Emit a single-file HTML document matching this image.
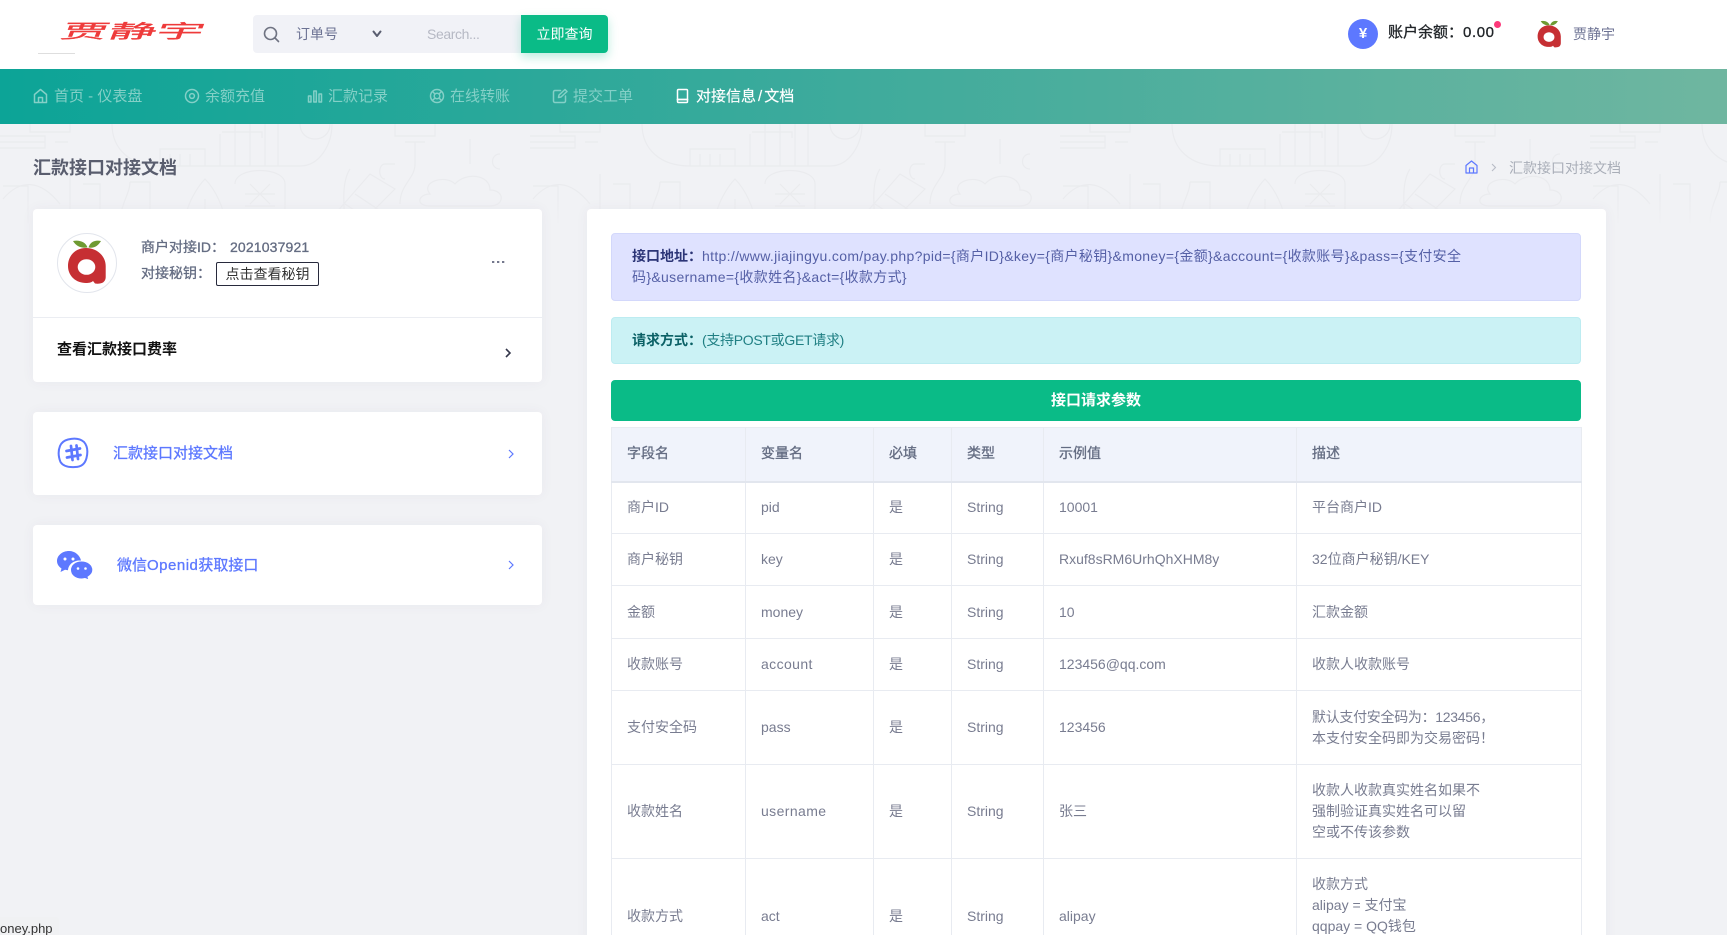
<!DOCTYPE html>
<html lang="zh-CN">
<head>
<meta charset="utf-8">
<title>汇款接口对接文档</title>
<style>
*{box-sizing:border-box;margin:0;padding:0}
html,body{width:1727px;height:935px;overflow:hidden;background:#f1f2f5}
#root{position:relative;width:1727px;height:935px;overflow:hidden;background:#f1f2f5;font-family:"Liberation Sans","Noto Sans CJK SC",sans-serif;font-size:14px;color:#6c7293}
.a{position:absolute;white-space:nowrap;line-height:20px}
.m{-webkit-text-stroke:.3px currentColor}
#hd{position:absolute;left:0;top:0;width:1727px;height:69px;background:#fff}
#nav{position:absolute;left:0;top:69px;width:1727px;height:55px;background:linear-gradient(90deg,#0ca497 0%,#3fab9c 50%,#6fb6a0 100%)}
.nt{font-size:15px;color:#84d0c7;top:87px}
.ni{position:absolute;top:88px;fill:none;stroke:#84d0c7;stroke-width:1.5;stroke-linecap:round;stroke-linejoin:round}
.card{position:absolute;left:33px;width:509px;background:#fff;border-radius:4px;box-shadow:0 0 13px rgba(82,63,105,.05)}
#panel{position:absolute;left:587px;top:209px;width:1019px;height:740px;background:#fff;border-radius:4px;box-shadow:0 0 13px rgba(82,63,105,.05)}
.alert{position:absolute;left:611px;width:970px;border-radius:4px;line-height:21px}
table{position:absolute;left:611px;top:427px;width:970px;border-collapse:collapse;table-layout:fixed;background:#fff;font-size:14px;color:#787c90}
td,th{border:1px solid #e8ebf1;padding:0 15px;text-align:left;vertical-align:middle;line-height:21px;font-weight:400;white-space:nowrap;overflow:hidden}
th{background:#f0f3fb;color:#646c82;border-bottom:2px solid #e2e6ee;-webkit-text-stroke:.3px #646c82;padding-bottom:2px}
</style>
</head>
<body>
<div id="root">
<!-- background doodle -->
<svg style="position:absolute;left:0;top:124px" width="1727" height="100" viewBox="0 0 1727 100">
<defs>
<linearGradient id="f" x1="0" y1="0" x2="0" y2="1"><stop offset="0" stop-color="#fff"/><stop offset=".75" stop-color="#fff"/><stop offset="1" stop-color="#000"/></linearGradient>
<mask id="mk"><rect width="1727" height="100" fill="url(#f)"/></mask>
<pattern id="dd" width="530" height="100" patternUnits="userSpaceOnUse">
<g fill="none" stroke="#eaebee" stroke-width="1.2">
<path d="M0 12H45V24H0M0 18H45M55 18H68"/>
<path d="M30 0V8H70V0M112 0C112 25 130 42 160 42H300C320 42 332 20 332 0"/>
<path d="M160 42V25H205V42M170 42V30M180 42V30M190 42V30"/>
<path d="M220 10V42M235 0V42M250 0V42M265 0V42M278 0V42M222 8H262V14"/>
<path d="M300 0C300 20 330 20 330 0M395 0V12H435V0M405 18H425M415 18V40C415 55 400 60 400 80"/>
<path d="M395 40H385C378 40 378 55 385 55M470 15V40M500 30C490 30 490 45 500 45"/>
<path d="M3 62H28V100M3 75C20 55 40 55 60 80M70 50V100M83 60H100V100"/>
<path d="M235 60C235 42 285 42 285 60V100M245 70H275M245 82H275M245 94H275M250 60L270 80M270 60L250 80"/>
<path d="M335 90L370 50L395 65L360 100M345 80L375 100M355 70L385 90"/>
<path d="M430 70C420 58 445 50 455 60C465 48 490 50 490 66C505 66 505 82 490 82H430C415 82 418 70 430 70Z"/>
<path d="M350 45C340 60 345 90 345 100M185 100C185 80 200 60 205 55C215 65 225 85 225 100M205 75V90"/>
<path d="M130 58H150V100M120 100C120 80 130 70 130 58"/>
</g>
</pattern>
</defs>
<rect width="1727" height="100" fill="url(#dd)" mask="url(#mk)"/>
</svg>

<!-- header -->
<div id="hd"></div>
<div class="a m" style="left:62px;top:20px;font-size:19px;line-height:22px;color:#ee3b3b;transform-origin:0 50%;transform:skewX(-22deg) scaleX(2.5);font-family:'Noto Sans CJK SC',sans-serif">贾静宇</div>
<div style="position:absolute;left:38px;top:53px;width:37px;height:1px;background:#dedede"></div>

<div style="position:absolute;left:253px;top:15px;width:268px;height:38px;background:#f1f2f7;border-radius:4px 0 0 4px"></div>
<svg style="position:absolute;left:263px;top:26px" width="18" height="17" viewBox="0 0 18 17" fill="none" stroke="#6f7382" stroke-width="1.6" stroke-linecap="round"><circle cx="7.5" cy="7.5" r="6"/><path d="M12 12L15.5 15.5"/></svg>
<div class="a" style="left:296px;top:24px;color:#6c7293">订单号</div>
<svg style="position:absolute;left:372px;top:30px" width="10" height="8" viewBox="0 0 10 8" fill="none" stroke="#5a5e70" stroke-width="2" stroke-linecap="round" stroke-linejoin="round"><path d="M1.5 1.5L5 6L8.5 1.5"/></svg>
<div class="a" style="left:427px;top:24px;color:#b6b9c4;letter-spacing:-.4px">Search...</div>
<div class="a" style="left:521px;top:15px;width:87px;height:38px;line-height:38px;background:#0abb87;color:#fff;text-align:center;border-radius:0 4px 4px 0;box-shadow:0 4px 10px rgba(10,187,135,.28)">立即查询</div>

<div style="position:absolute;left:1348px;top:19px;width:30px;height:30px;border-radius:50%;background:#5d78ff;color:#fff;text-align:center;font:bold 15px/30px 'Liberation Sans',sans-serif">¥</div>
<div class="a m" style="left:1388px;top:23px;font-size:15px;color:#212529">账户余额：<span style="letter-spacing:.6px">0.00</span></div>
<div style="position:absolute;left:1493.500px;top:20.500px;width:7px;height:7px;border-radius:50%;background:#fd397a"></div>
<svg style="position:absolute;left:1537px;top:19px" width="24" height="30" viewBox="10 6 39 46"><path d="M29 15C18 15 11 23 11 33C11 43 19 50 29 50C32 50 34.500 49.500 36 48L38 50.500C41 51 44 50.500 46 49.500C48 48 48.700 46 48.700 44V33C48.700 23 40 15 29 15Z" fill="#c62f33"/><ellipse cx="29.500" cy="34" rx="8.800" ry="7.800" fill="#fff"/><path d="M16 8C22 6.500 29 9 30.500 14.500C24 15.500 19 13 16 8ZM44 8C38 6.500 33 9 31.500 14.500C37 15.500 41 13 44 8Z" fill="#6e9a32"/></svg>
<div class="a" style="left:1573px;top:24px;color:#6c7293">贾静宇</div>

<!-- nav -->
<div id="nav"></div>
<svg class="ni" style="left:33px" width="15" height="16" viewBox="0 0 15 16"><path d="M1.500 6.500L7.500 1.500L13.500 6.500V14.500H1.500ZM5.500 14.500V9.500H9.500V14.500"/></svg>
<div class="a nt" style="left:54px">首页 - 仪表盘</div>
<svg class="ni" style="left:184px" width="16" height="16" viewBox="0 0 16 16"><circle cx="8" cy="8" r="6.500"/><circle cx="8" cy="8" r="2.400"/></svg>
<div class="a nt" style="left:205px">余额充值</div>
<svg class="ni" style="left:307px" width="16" height="16" viewBox="0 0 16 16"><rect x="1.500" y="8" width="2.500" height="6"/><rect x="6.800" y="3" width="2.500" height="11"/><rect x="12" y="6" width="2.500" height="8"/></svg>
<div class="a nt" style="left:328px">汇款记录</div>
<svg class="ni" style="left:429px" width="16" height="16" viewBox="0 0 16 16"><circle cx="8" cy="8" r="6.500"/><circle cx="8" cy="8" r="2.800"/><path d="M3.500 3.500L6 6M12.500 3.500L10 6M3.500 12.500L6 10M12.500 12.500L10 10"/></svg>
<div class="a nt" style="left:450px">在线转账</div>
<svg class="ni" style="left:552px" width="16" height="16" viewBox="0 0 16 16"><path d="M8.500 2.500H3C2.200 2.500 1.500 3.200 1.500 4V13C1.500 13.800 2.200 14.500 3 14.500H12C12.800 14.500 13.500 13.800 13.500 13V8"/><path d="M6.500 9.500L7 7L13 1.500L15 3.500L9 9Z"/></svg>
<div class="a nt" style="left:573px">提交工单</div>
<svg class="ni" style="left:676px;stroke:#fff" width="13" height="16" viewBox="0 0 13 16"><rect x="1.500" y="1.500" width="10" height="13" rx="1"/><path d="M1.500 11.500H11.500" stroke-width="1.800"/></svg>
<div class="a nt" style="left:696px;color:#fff;-webkit-text-stroke:.15px #fff">对接信息<span style="padding:0 2px">/</span>文档</div>

<!-- page title -->
<div class="a" style="left:33px;top:157px;font-size:18px;line-height:22px;font-weight:700;color:#595d6e">汇款接口对接文档</div>
<svg style="position:absolute;left:1465px;top:160px" width="13" height="14" viewBox="0 0 13 14" fill="none" stroke="#5d78ff" stroke-width="1.200" stroke-linejoin="round"><path d="M1 5.500L6.500 1L12 5.500V13H1ZM4.500 13V8H8.500V13"/></svg>
<svg style="position:absolute;left:1491px;top:163px" width="6" height="9" viewBox="0 0 6 9" fill="none" stroke="#b8bcc6" stroke-width="1.100"><path d="M1 1L4.500 4.500L1 8"/></svg>
<div class="a" style="left:1509px;top:158px;color:#a9aeb8">汇款接口对接文档</div>

<!-- left cards -->
<div class="card" style="top:209px;height:173px"></div>
<div style="position:absolute;left:33px;top:317px;width:509px;height:1px;background:#ebedf2"></div>
<div style="position:absolute;left:57px;top:233px;width:60px;height:60px;border-radius:50%;border:1px solid #e2e5ec;background:#fff"></div>
<svg style="position:absolute;left:57px;top:233px" width="60" height="60" viewBox="0 0 60 60"><path d="M29 15C18 15 11 23 11 33C11 43 19 50 29 50C32 50 34.500 49.500 36 48L38 50.500C41 51 44 50.500 46 49.500C48 48 48.700 46 48.700 44V33C48.700 23 40 15 29 15Z" fill="#c62f33"/><ellipse cx="29.500" cy="34" rx="8.800" ry="7.800" fill="#fff"/><path d="M16 8C22 6.500 29 9 30.500 14.500C24 15.500 19 13 16 8ZM44 8C38 6.500 33 9 31.500 14.500C37 15.500 41 13 44 8Z" fill="#6e9a32"/></svg>
<div class="a m" style="left:141px;top:237px;color:#646c82">商户对接ID：<span style="margin-left:5px;letter-spacing:.15px">2021037921</span></div>
<div class="a m" style="left:141px;top:263px;color:#646c82">对接秘钥：</div>
<div class="a" style="left:216px;top:262px;width:103px;height:24px;line-height:22px;border:1px solid #282a3c;border-radius:2px;text-align:center;color:#333">点击查看秘钥</div>
<svg style="position:absolute;left:492px;top:260px" width="13" height="4" viewBox="0 0 13 4" fill="#74788d"><rect x="0" y="1" width="2.300" height="2"/><rect x="5" y="1" width="2.300" height="2"/><rect x="10" y="1" width="2.300" height="2"/></svg>
<div class="a" style="left:57px;top:340px;font-size:15px;color:#111;font-weight:700">查看汇款接口费率</div>
<svg style="position:absolute;left:504px;top:347px" width="8" height="12" viewBox="0 0 8 12" fill="none" stroke="#33364a" stroke-width="1.600"><path d="M2 2L6 6L2 10"/></svg>

<div class="card" style="top:412px;height:83px"></div>
<svg style="position:absolute;left:57px;top:437px" width="32" height="32" viewBox="0 0 32 32" fill="none" stroke="#5d78ff"><path d="M11 2.500C17 1 23 1.500 27 5C30.500 9 31 15 29.500 21C28 27 24 30 18 30C11 30.500 6 29 3.500 25C1.500 20 1 14 3 9C4.500 5.500 7 3.500 11 2.500Z" stroke-width="2"/><path d="M9.500 14L23 11.500M10 20.500L23.500 18M14 9L15.500 23M19.500 8.500L21 22" stroke-width="2.700" stroke-linecap="round"/></svg>
<div class="a m" style="left:113px;top:443.500px;font-size:15px;color:#5d78ff">汇款接口对接文档</div>
<svg style="position:absolute;left:507px;top:448px" width="8" height="12" viewBox="0 0 8 12" fill="none" stroke="#5d78ff" stroke-width="1.200"><path d="M2 2L6 6L2 10"/></svg>

<div class="card" style="top:525px;height:80px"></div>
<svg style="position:absolute;left:57px;top:551px" width="36" height="29" viewBox="0 0 36 29"><path d="M12 0C5.500 0 0 4.300 0 10C0 13 1.800 15.800 4.500 17.500L3.500 21L8 18.800C9 19 10 19.200 11 19.200C11.500 13 17 9 24 9.500C22.800 4 17.800 0 12 0Z" fill="#5d78ff"/><path d="M24.500 10C18 10 13.500 14 13.500 19C13.500 24 18 28 24.500 28C25.500 28 27 27.700 28 27.500L32 29L31 26C33.800 24.300 35.800 22 35.800 19C35.800 14 31 10 24.500 10Z" fill="#5d78ff" stroke="#fff" stroke-width="1"/><circle cx="8" cy="8" r="1.500" fill="#fff"/><circle cx="16" cy="8" r="1.500" fill="#fff"/><circle cx="21" cy="17.500" r="1.300" fill="#fff"/><circle cx="28.500" cy="17.500" r="1.300" fill="#fff"/></svg>
<div class="a m" style="left:117px;top:556px;font-size:15px;color:#5d78ff">微信<span style="letter-spacing:.5px">Openid</span>获取接口</div>
<svg style="position:absolute;left:507px;top:559px" width="8" height="12" viewBox="0 0 8 12" fill="none" stroke="#5d78ff" stroke-width="1.200"><path d="M2 2L6 6L2 10"/></svg>

<!-- right panel -->
<div id="panel"></div>
<div class="alert" style="top:233px;height:68px;background:#dfe2ff;border:1px solid #d3d8fb;padding:12px 20px;color:#5560a6;white-space:nowrap"><b style="color:#2c3577">接口地址：</b><span style="letter-spacing:.33px">http://www.jiajingyu.com/pay.php?pid={商户ID}&amp;key={商户秘钥}&amp;money={金额}&amp;account={收款账号}&amp;pass={支付安全<br>码}&amp;username={收款姓名}&amp;act={收款方式}</span></div>
<div class="alert" style="top:317px;height:47px;background:#cbf2f5;border:1px solid #bdecf1;padding:12px 20px;color:#1f7f83"><b style="color:#0b6166">请求方式：</b><span style="letter-spacing:-.3px">(支持POST或GET请求)</span></div>
<div class="alert" style="top:380px;height:41px;line-height:41px;background:#0abb87;color:#fff;text-align:center;font-size:15px;font-weight:700">接口请求参数</div>

<table>
<colgroup><col style="width:134px"><col style="width:128px"><col style="width:78px"><col style="width:92px"><col style="width:253px"><col style="width:285px"></colgroup>
<tr style="height:54px"><th>字段名</th><th>变量名</th><th>必填</th><th>类型</th><th>示例值</th><th>描述</th></tr>
<tr style="height:52px"><td>商户ID</td><td>pid</td><td>是</td><td>String</td><td>10001</td><td>平台商户ID</td></tr>
<tr style="height:52px"><td>商户秘钥</td><td>key</td><td>是</td><td>String</td><td>Rxuf8sRM6UrhQhXHM8y</td><td>32位商户秘钥/KEY</td></tr>
<tr style="height:53px"><td>金额</td><td>money</td><td>是</td><td>String</td><td>10</td><td>汇款金额</td></tr>
<tr style="height:52px"><td>收款账号</td><td><span style="letter-spacing:.4px">account</span></td><td>是</td><td>String</td><td>123456@qq.com</td><td>收款人收款账号</td></tr>
<tr style="height:74px"><td>支付安全码</td><td>pass</td><td>是</td><td>String</td><td>123456</td><td><span style="letter-spacing:-.3px">默认支付安全码为：123456，</span><br>本支付安全码即为交易密码！</td></tr>
<tr style="height:94px"><td>收款姓名</td><td><span style="letter-spacing:.4px">username</span></td><td>是</td><td>String</td><td>张三</td><td>收款人收款真实姓名如果不<br>强制验证真实姓名可以留<br>空或不传该参数</td></tr>
<tr style="height:116px"><td>收款方式</td><td>act</td><td>是</td><td>String</td><td>alipay</td><td style="vertical-align:top;padding-top:15px">收款方式<br>alipay = 支付宝<br>qqpay = QQ钱包<br>wxpay = 微信支付</td></tr>
</table>

<div style="position:absolute;left:0;top:917px;width:59px;height:18px;background:#f0f1f3;border-radius:0 3px 0 0"></div>
<div class="a" style="left:0;top:919px;font-size:13px;color:#333">oney.php</div>
</div>
</body>
</html>
